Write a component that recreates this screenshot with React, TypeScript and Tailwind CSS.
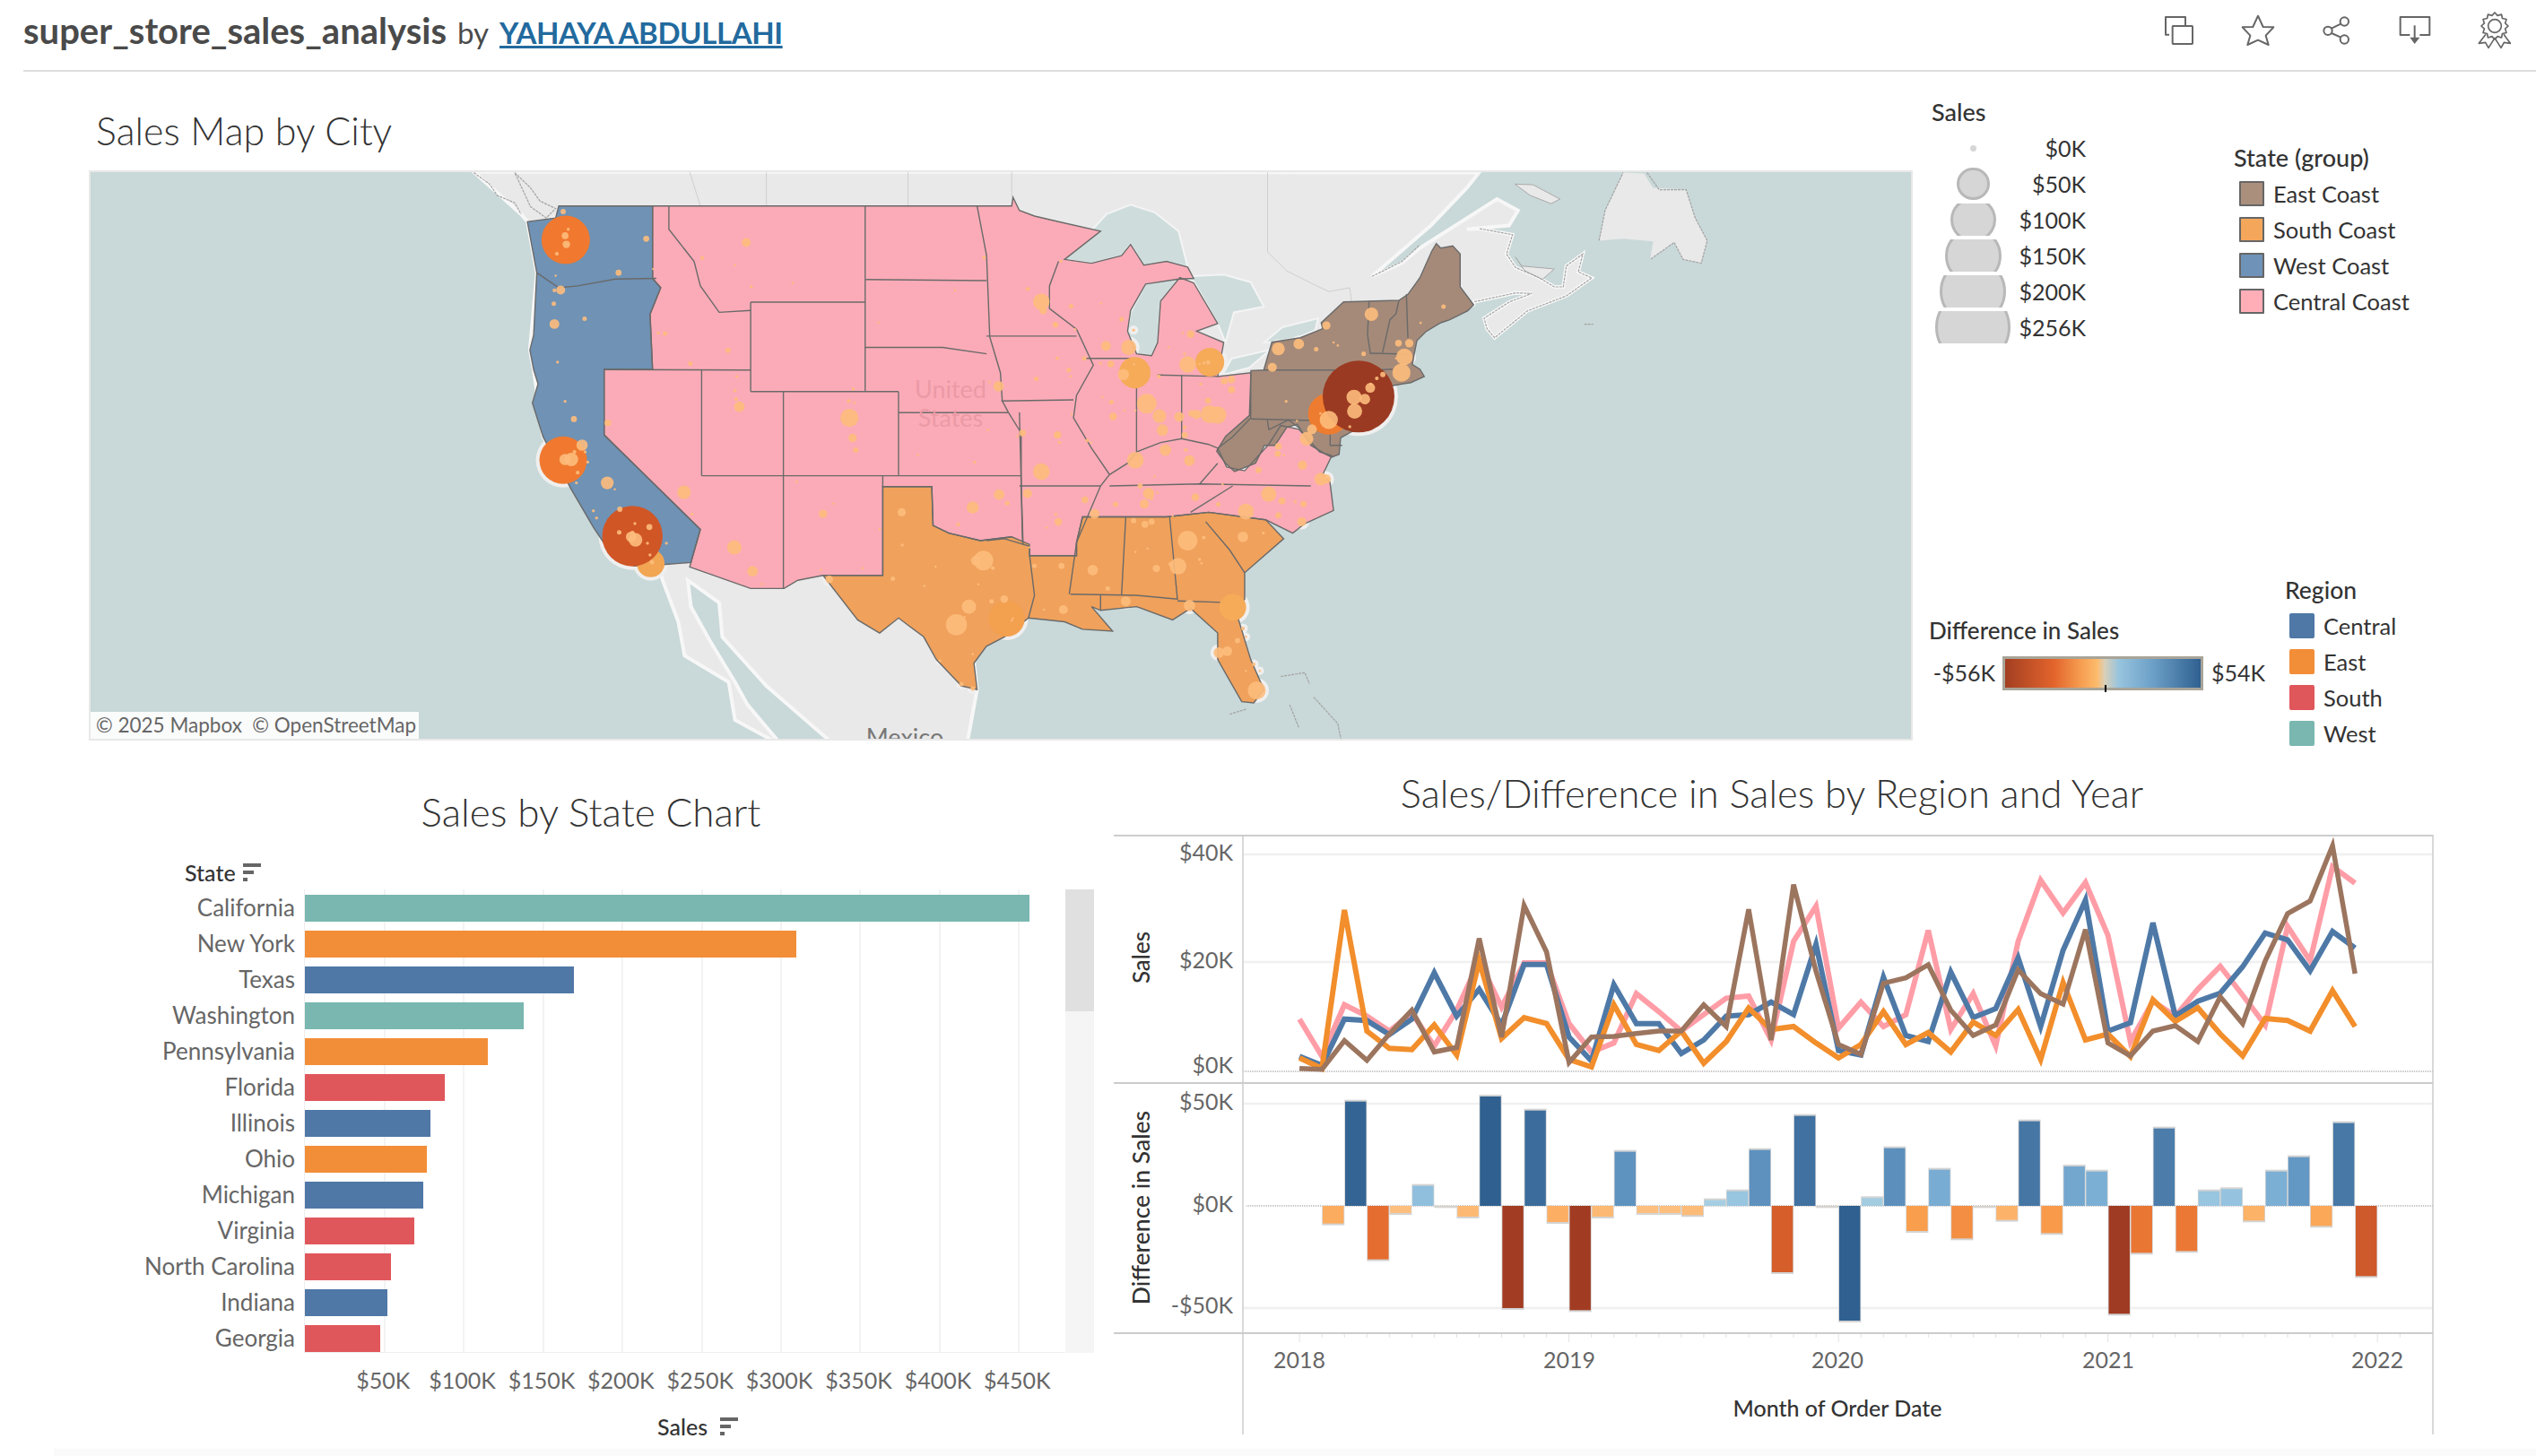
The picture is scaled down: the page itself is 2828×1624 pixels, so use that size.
import React from "react";

type Pt = [number, number];
const pairs = (a: number[], f: (x: number, y: number) => Pt): Pt[] => {
  const r: Pt[] = [];
  for (let i = 0; i + 1 < a.length; i += 2) r.push(f(a[i], a[i + 1]));
  return r;
};
const wf = (x: number, y: number): Pt => [90 + x / 1.4255, 180 + y / 2.376];
const ef = (x: number, y: number): Pt => [1100 + x / 1.493, 180 + y / 2.376];
const nf = (x: number, y: number): Pt => [1350 + x / 3, 240 + y / 3];
const W = (...a: number[]) => pairs(a, wf);
const E = (...a: number[]) => pairs(a, ef);
const N = (...a: number[]) => pairs(a, nf);
const P = (...g: Pt[][]) => g.flat().map((p) => `${p[0].toFixed(1)},${p[1].toFixed(1)}`).join(" ");

const SEA = "#c9d8d8";
const LAND = "#e9e9e9";

const land = P(
  W(625, 28),
  E(0, 28, 820, 30, 800, 70, 740, 170),
  N(540, 205, 640, 160, 700, 110),
  E(850, 100, 885, 130, 870, 170, 800, 180),
  N(900, 45, 1010, 65, 990, 130, 1020, 175, 1100, 210, 1150, 240, 1180, 240, 1190, 170, 1245, 130, 1230, 190, 1275, 210, 1190, 270, 1060, 320, 950, 410, 925, 380, 915, 345, 1000, 290, 1075, 262, 1020, 260, 880, 290, 880, 300),
  E(720, 440, 700, 560, 560, 680, 500, 900, 400, 1100, 250, 1170, 100, 1190, 0, 1240),
  W(1420, 1330, 1425, 1400, 1410, 1535, 1190, 1535, 1090, 1390, 1020, 1260, 1015, 1170, 965, 1110, 970, 1180, 1000, 1270, 1040, 1380, 1060, 1440, 1108, 1535, 1100, 1535, 1040, 1480, 1030, 1380, 960, 1310, 950, 1220, 925, 1110, 920, 1080, 880, 1050, 780, 850, 735, 730, 720, 552, 714, 500, 725, 295, 710, 160, 700, 140)
);
const newfoundland = P(E(1020, 210, 1030, 130, 1060, 30, 1095, 32, 1110, 70, 1165, 75, 1180, 150, 1200, 210, 1190, 270, 1160, 260, 1145, 215, 1105, 260, 1110, 212, 1060, 205));
const anticosti = P(E(880, 60, 910, 62, 955, 100, 940, 112, 905, 90));
const pei = P(N(1020, 140, 1040, 170, 1150, 180, 1110, 215, 1050, 185));

const westCoast = P(W(760, 118, 909, 118, 909, 310, 922, 335, 905, 405, 909, 552, 832, 552, 832, 725, 985, 975, 970, 1063, 930, 1068, 880, 1072, 835, 1020, 815, 970, 780, 870, 735, 730, 718, 640, 727, 590, 720, 552, 714, 500, 720, 460, 725, 295, 710, 160, 755, 150));
const central = P(
  W(909, 118, 1480, 118, 1482, 95),
  E(55, 130, 80, 145, 120, 160, 190, 185, 130, 260, 175, 270, 225, 250, 240, 220, 262, 275, 300, 265, 335, 280, 345, 310, 320, 312, 265, 325, 240, 395, 235, 450, 250, 510, 275, 515, 285, 480, 290, 370, 322, 308, 345, 322, 385, 430, 350, 450, 395, 480, 385, 570, 440, 560, 440, 680, 410, 730, 385, 760, 400, 810, 430, 820, 470, 750, 490, 700, 520, 710, 555, 770, 575, 780, 560, 830, 572, 850, 578, 925, 530, 960, 510, 985, 465, 950, 370, 930, 300, 942, 160, 942, 150, 1010, 150, 1045, 72, 1045, 72, 1020, 30, 1000, 0, 1005),
  W(1480, 995, 1430, 1005, 1380, 985, 1355, 965, 1353, 862, 1275, 862, 1275, 1097, 1180, 1097, 1140, 1110, 1118, 1132, 1065, 1132, 968, 1075, 985, 975, 832, 725, 832, 552, 909, 552, 905, 405, 922, 335, 909, 310)
);
const south = P(
  W(1275, 862, 1353, 862, 1355, 965, 1380, 985, 1430, 1005, 1480, 995, 1508, 1015),
  E(72, 1045, 150, 1045, 150, 1010, 160, 942, 300, 942, 370, 930, 465, 950, 495, 1000, 430, 1090, 430, 1160, 415, 1190, 440, 1320, 462, 1400, 445, 1435, 425, 1432, 385, 1320, 385, 1250, 340, 1185, 310, 1215, 250, 1180, 190, 1190, 175, 1180, 210, 1245, 160, 1240, 130, 1220, 70, 1210, 30, 1260, 0, 1285),
  W(1420, 1330, 1425, 1400, 1400, 1390, 1360, 1320, 1340, 1260, 1300, 1210, 1270, 1250, 1235, 1215, 1180, 1097, 1275, 1097)
);
const eastCoast = P(N(755, 95, 770, 110, 810, 103, 835, 130, 835, 240, 880, 300, 860, 320, 800, 350, 770, 360, 720, 390, 690, 420, 680, 470, 675, 500, 700, 515, 715, 540, 670, 560, 610, 570, 480, 720, 435, 745, 430, 800, 405, 810, 385, 800, 335, 770, 290, 700, 255, 710, 215, 770, 180, 770, 150, 830, 80, 858, 50, 830, 20, 790, 50, 740, 130, 670, 135, 520, 178, 518, 205, 425, 300, 410, 375, 380, 370, 360, 445, 290, 630, 285, 660, 265, 700, 210, 740, 120));

const lakes = [
  P(E(130, 260, 200, 140, 240, 115, 280, 135, 320, 185, 335, 280, 300, 265, 262, 275, 240, 220, 225, 250, 175, 270)),
  P(E(240, 400, 265, 325, 322, 308, 290, 370, 285, 480, 275, 515, 250, 510, 235, 450)),
  P(E(325, 305, 395, 300, 440, 320, 462, 385, 412, 400, 398, 480, 385, 430, 345, 318)),
  P(N(40, 535, 70, 480, 200, 450, 130, 510)),
  P(N(180, 425, 240, 375, 360, 345, 350, 385, 290, 410, 205, 425)),
];

const borderLines = [
  W(725, 295, 760, 335, 790, 330, 850, 312, 915, 310), W(832, 552, 1065, 553), W(935, 118, 935, 180, 975, 265, 985, 330, 1015, 400, 1065, 395),
  W(1065, 373, 1065, 610), W(1065, 373, 1247, 373), W(1247, 118, 1247, 610), W(1248, 313, 1440, 316), W(1247, 493, 1370, 493, 1440, 510),
  W(1065, 610, 1300, 610), W(1300, 610, 1300, 833), W(1300, 666, 1475, 666), W(987, 553, 987, 833), W(1117, 610, 1117, 1132), W(987, 833, 1495, 833),
  W(1275, 833, 1275, 862), W(1495, 720, 1495, 860, 1498, 1015), W(1475, 666, 1495, 720), W(1425, 118, 1440, 250, 1445, 465), W(1445, 465, 1462, 560, 1465, 635, 1475, 666),
  E(0, 463, 150, 463), E(25, 635, 145, 632), E(120, 265, 105, 330, 105, 390, 150, 445, 178, 540, 150, 620, 145, 680, 175, 760, 205, 830, 190, 860, 150, 1010),
  E(165, 522, 245, 522), E(250, 570, 250, 770, 235, 800, 205, 830), E(325, 566, 325, 735), E(285, 566, 385, 570), E(250, 770, 290, 745, 325, 735, 370, 750, 385, 760),
  E(205, 860, 355, 855, 540, 860), E(355, 855, 385, 800), E(410, 860, 340, 930), E(55, 665, 58, 860, 60, 1010), E(55, 860, 190, 860),
  E(232, 942, 225, 1148), E(305, 942, 318, 1160, 250, 1150, 140, 1147), E(150, 1010, 138, 1147), E(190, 1150, 190, 1188), E(365, 955, 405, 1030, 430, 1090), E(318, 1165, 415, 1170),
  E(72, 1045, 80, 1150, 70, 1210),
  N(530, 290, 525, 400, 535, 465), N(630, 285, 620, 330, 600, 350, 575, 460), N(655, 265, 660, 410), N(535, 462, 665, 465), N(525, 520, 610, 515), N(178, 518, 415, 518),
  N(135, 682, 370, 688), N(190, 685, 195, 718, 260, 685, 300, 715), N(400, 730, 400, 770, 440, 770),
];

const greyScribbles = [
  W(625, 30, 650, 60, 662, 90, 690, 110, 700, 140), W(690, 30, 715, 70, 730, 105, 755, 125, 740, 150, 715, 120, 690, 30),
  E(1020, 210, 1030, 130, 1060, 30), E(1100, 30, 1120, 75, 1165, 75, 1180, 150, 1200, 210, 1190, 270, 1160, 260, 1145, 215, 1105, 260),
  N(900, 45, 1010, 65, 990, 130, 1020, 175, 1100, 210, 1150, 240, 1180, 240, 1190, 170, 1245, 130, 1230, 190, 1275, 210, 1190, 270, 1060, 320, 950, 410, 925, 380, 915, 345, 1000, 290, 1075, 262, 1020, 260, 880, 290),
  N(540, 205, 640, 155, 700, 100),
  E(490, 1365, 530, 1355, 538, 1385), E(505, 1440, 520, 1500), E(545, 1420, 585, 1490, 590, 1530), E(405, 1465, 432, 1452), N(1250, 365, 1280, 365),
];

const blobs = [
  W(968, 28, 985, 118), W(1090, 28, 1090, 118), W(1315, 28, 1315, 118), W(1480, 28, 1480, 95),
  E(468, 28, 468, 240, 500, 290, 550, 330, 570, 345, 605, 335, 608, 372),
];

const westDots = [767,133,7,775,180,4,770,197,9,772,220,10,757,245,5,899,205,8,855,295,8,910,285,3,763,341,12,753,342,5,755,303,3,752,377,6,753,431,13,801,417,6,758,532,4,770,636,4,784,683,8,838,693,9,797,752,15,785,770,5,780,790,18,770,790,15,790,825,5,806,797,4,802,770,4,788,852,4,837,852,17,849,869,3,815,926,4,820,945,4,857,922,7,881,960,4,904,969,8,856,983,6,877,985,6,882,1003,18,875,995,14,901,1012,4,905,1043,4,931,1012,4,908,1062,6,959,877,18,1058,215,12,988,256,5,1040,275,3,1066,332,4,1132,322,3,1029,501,7,969,536,6,918,455,4,929,456,6,1043,570,4,1040,607,4,1042,630,5,1047,650,14,972,935,4,1039,1023,19,1068,1086,14,1083,1120,3,1180,934,11,1197,907,3,1138,849,3,1243,1078,3,1177,1083,3,1222,680,24,1221,635,5,1228,603,4,1230,640,3,1227,733,11,1232,765,7,1268,427,3,1390,342,3,1331,778,3,1421,797,4,1442,712,3,1436,255,5,1505,338,4,1527,372,22,1530,395,10,1549,432,6,1519,576,6,1552,522,4,1459,596,14,1445,585,3,1497,720,9,1489,728,3,1553,725,9,1527,822,22,1555,745,3,1460,883,14,1473,906,6,1418,917,16,1505,880,12,1395,962,5,1554,955,10,1550,935,4,1535,970,3,1270,975,3,1508,1023,3,1305,930,11,1306,1017,4,1359,1074,3,1435,1058,26,1423,1058,13,1450,1078,5,1291,1106,6,1341,1125,3,1427,1121,3,1392,1228,28,1412,1180,19,1405,1207,3,1448,1166,6,1468,1160,10,1190,1108,10,1366,1323,4,1400,1385,6,1418,1397,6,1418,1306,3,1516,1072,6,1559,1072,8,1482,1211,3,1480,1217,3];
const eastDots = [124,265,4,69,338,5,141,384,6,191,376,3,115,433,7,148,445,3,225,418,6,245,447,4,199,489,13,237,493,20,163,522,6,119,522,3,190,535,4,207,537,9,137,553,6,140,570,3,228,565,15,246,538,3,287,570,5,303,493,3,330,510,4,335,538,22,340,458,10,327,455,3,362,534,4,355,537,3,369,533,6,357,590,4,396,582,9,408,578,10,408,605,9,369,634,8,267,642,26,193,625,3,208,638,6,230,660,3,211,676,10,248,660,3,142,670,3,288,675,18,321,677,13,330,705,5,342,668,9,350,671,12,372,670,24,385,672,23,293,712,15,330,725,8,118,725,9,122,745,4,168,740,5,174,745,3,298,765,15,248,792,22,332,765,5,338,793,14,280,835,3,164,897,9,215,909,7,180,934,13,256,860,7,270,880,15,275,893,5,285,878,3,263,908,12,348,890,10,386,909,6,393,856,3,432,928,21,470,882,20,492,900,9,514,902,4,528,908,8,486,938,8,525,955,12,310,940,3,245,952,7,264,962,9,275,955,8,335,1005,26,362,997,5,427,995,14,461,985,4,268,1026,3,248,1035,3,319,1073,22,307,1067,6,283,1079,10,355,1055,4,358,1065,3,177,1083,14,202,1132,6,232,1166,13,338,1177,15,128,1188,12,96,1188,3,427,1238,5,432,1260,3,418,1270,7,387,1302,14,401,1298,13,445,1333,5,432,1350,3,455,1350,3,450,1402,24,641,405,18,566,435,11,723,428,3,761,385,6,486,497,17,520,484,14,549,498,6,578,480,3,585,488,3,476,546,12,628,510,6,686,482,9,704,482,11,696,518,22,691,560,24,682,522,3,650,575,5,660,565,7,639,600,13,640,590,4,612,625,20,630,630,14,613,662,20,605,703,4,499,636,4,570,685,24,556,668,3,542,710,13,533,735,18,517,688,3,486,755,9,485,775,8,495,778,3,526,805,12,453,818,8,557,842,17,566,842,12];

const bigCircles: { c: Pt; r: number; fill: string }[] = [
  { c: wf(906, 1065), r: 15.5, fill: "#f2a552" },
  { c: wf(771, 208), r: 27, fill: "#f0792f" },
  { c: wf(767, 792), r: 26.5, fill: "#f0792f" },
  { c: wf(877, 993), r: 33.7, fill: "#d05626" },
  { c: wf(1472, 1212), r: 20, fill: "#f3a04f" },
  { c: ef(247, 560), r: 17.5, fill: "#f5ab58" },
  { c: ef(372, 532), r: 16, fill: "#f5ab58" },
  { c: ef(410, 1182), r: 15, fill: "#f5ab58" },
  { c: nf(395, 665), r: 23, fill: "#ee7c30" },
  { c: nf(495, 607), r: 40, fill: "#9b3a22" },
];

const dotEls = (a: number[], f: (x: number, y: number) => Pt, key: string, halo: boolean) => {
  const out: React.ReactNode[] = [];
  for (let i = 0; i + 2 < a.length; i += 3) {
    const [x, y] = f(a[i], a[i + 1]);
    const r = Math.max(1.3, a[i + 2] / 2.376);
    out.push(
      halo ? (
        <circle key={key + i} cx={x} cy={y} r={r + 3.5} fill="#efefef" />
      ) : (
        <circle key={key + i} cx={x} cy={y} r={r} fill="#fdbd7c" fillOpacity={0.9} />
      )
    );
  }
  return out;
};

function MapSvg() {
  return (
    <svg viewBox="101 192 2030 632" className="block w-full h-full" preserveAspectRatio="none">
      <rect x="99" y="190" width="2034" height="636" fill={SEA} />
      <polygon points={land} fill={LAND} stroke="#f7f7f7" strokeWidth="4" />
      <polygon points={newfoundland} fill={LAND} />
      <polygon points={anticosti} fill={LAND} stroke="#aaa" strokeWidth="1" />
      <polygon points={pei} fill={LAND} stroke="#aaa" strokeWidth="1" />
      {blobs.map((b, i) => <polyline key={i} points={P(b)} fill="none" stroke="#cfcfcf" strokeWidth="1" />)}
      {greyScribbles.map((b, i) => <polyline key={i} points={P(b)} fill="none" stroke="#a3a3a3" strokeWidth="1.2" strokeDasharray="3 1" />)}
      {lakes.map((l, i) => <polygon key={i} points={l} fill="#cedcdc" stroke="#f4f4f4" strokeWidth="2" />)}
      {bigCircles.map((c, i) => <circle key={i} cx={c.c[0]} cy={c.c[1]} r={c.r + 4} fill="#efefef" />)}
      {dotEls(westDots, wf, "hw", true)}
      {dotEls(eastDots, ef, "he", true)}
      {[
        [westCoast, "#6f92b5"],
        [central, "#fbabb7"],
        [south, "#f0a15b"],
        [eastCoast, "#a58a79"],
      ].map(([p, c], i) => <polygon key={i} points={p} fill={c} />)}
      {[westCoast, central, south, eastCoast].map((p, i) => <polygon key={i} points={p} fill="none" stroke="#6a6a6a" strokeWidth="1.4" />)}
      {borderLines.map((b, i) => <polyline key={i} points={P(b)} fill="none" stroke="#6a6a6a" strokeWidth="1.4" />)}
      <text x="1060" y="444" textAnchor="middle" fontSize="27" fill="#eb9aa6" fontFamily="Lato, sans-serif">United</text>
      <text x="1060" y="476" textAnchor="middle" fontSize="27" fill="#eb9aa6" fontFamily="Lato, sans-serif">States</text>
      <text x="1009" y="832" textAnchor="middle" fontSize="27" fill="#777" fontFamily="Lato, sans-serif">Mexico</text>
      {bigCircles.map((c, i) => <circle key={i} cx={c.c[0]} cy={c.c[1]} r={c.r} fill={c.fill} />)}
      {dotEls(westDots, wf, "w", false)}
      {dotEls(eastDots, ef, "e", false)}
    </svg>
  );
}

const rows: [string, number, string][] = [
  ["California", 809, "#79b7b0"], ["New York", 549, "#f28e38"], ["Texas", 301, "#4f78a6"], ["Washington", 245, "#79b7b0"], ["Pennsylvania", 205, "#f28e38"],
  ["Florida", 157, "#e0575b"], ["Illinois", 141, "#4f78a6"], ["Ohio", 137, "#f28e38"], ["Michigan", 133, "#4f78a6"], ["Virginia", 123, "#e0575b"],
  ["North Carolina", 97, "#e0575b"], ["Indiana", 93, "#4f78a6"], ["Georgia", 85, "#e0575b"],
];
const ticks = ["$50K", "$100K", "$150K", "$200K", "$250K", "$300K", "$350K", "$400K", "$450K"];

const pink = [860,985,812,850,900,840,950,830,665,820,672,672,875,970,940,775,835,900,845,790,783,930,600,482,890,803,885,845,563,895,775,950,600,395,505,403,580,935,800,850,760,683,780,880,550,665,350,405];
const blue = [985,1015,860,865,912,860,705,850,760,880,677,677,920,1000,745,875,875,975,930,850,845,803,845,610,965,980,720,915,935,703,855,825,655,885,630,462,900,872,538,850,800,773,685,572,595,698,567,622];
const orange = [990,1025,495,900,958,962,880,980,665,925,855,875,995,1020,812,945,965,900,1008,935,823,895,885,940,990,945,835,945,905,970,870,915,828,995,738,930,910,985,795,868,822,910,983,858,865,900,765,885];
const brown = [1025,1028,932,998,910,830,970,955,590,920,480,635,1005,920,918,908,900,900,812,885,493,930,410,700,945,978,740,722,678,830,915,880,695,775,810,560,940,983,900,882,935,785,875,665,507,465,280,708];

const zx = (i: number) => 229 + 26.17 * i;
const fx = (z: number) => 1230 + z / 1.045;
const line = (a: number[]) => a.map((y, i) => `${fx(zx(i)).toFixed(1)},${(850 + y / 3).toFixed(1)}`).join(" ");

const diffs = [500,80,620,465,362,442,477,63,783,110,495,790,477,248,465,465,472,410,380,242,663,128,442,825,403,236,525,308,550,442,488,146,532,297,314,802,598,170,592,380,373,490,314,266,508,152,676];

const stops: [number, number[]][] = [
  [-56, [0x9a, 0x38, 0x21]], [-45, [0xab, 0x43, 0x25]], [-30, [0xe0, 0x65, 0x2d]], [-20, [0xf0, 0x80, 0x38]], [-12, [0xfb, 0xa3, 0x50]], [-3, [0xfd, 0xc4, 0x85]],
  [0, [0xd8, 0xd8, 0xc8]], [3, [0xa8, 0xcf, 0xe2]], [10, [0x92, 0xc1, 0xdf]], [18, [0x7b, 0xae, 0xd3]], [25, [0x63, 0x97, 0xc3]], [38, [0x4d, 0x7e, 0xab]], [54, [0x2f, 0x60, 0x90]],
];
const colorOf = (v: number) => {
  for (let i = 0; i < stops.length - 1; i++) {
    const [a, ca] = stops[i];
    const [b, cb] = stops[i + 1];
    if (v >= a && v <= b) {
      const t = (v - a) / (b - a);
      return `rgb(${ca.map((c, k) => Math.round(c + (cb[k] - c) * t)).join(",")})`;
    }
  }
  return "#2f6090";
};

const SVGFONT = "Lato, sans-serif";

function Charts() {
  const monthTicks: number[] = [];
  for (let i = 0; i <= 49; i++) monthTicks.push(fx(zx(i)));
  return (
    <svg viewBox="1230 920 1500 690" className="block w-[1500px] h-[690px]">
      <line x1="1386" y1="953" x2="2713" y2="953" stroke="#f0f0f0" strokeWidth="2.5" />
      <line x1="1386" y1="1073" x2="2713" y2="1073" stroke="#f0f0f0" strokeWidth="2.5" />
      <line x1="1386" y1="1195" x2="2713" y2="1195" stroke="#c4c4c4" strokeWidth="2" strokeDasharray="1 1" />
      <polyline points={line(pink)} fill="none" stroke="#ff9da7" strokeWidth="6" strokeLinejoin="miter" />
      <polyline points={line(blue)} fill="none" stroke="#4e79a7" strokeWidth="6" strokeLinejoin="miter" />
      <polyline points={line(orange)} fill="none" stroke="#f28e2b" strokeWidth="6" strokeLinejoin="miter" />
      <polyline points={line(brown)} fill="none" stroke="#9c755f" strokeWidth="5.500" strokeLinejoin="miter" />
      <line x1="1386" y1="1231" x2="2713" y2="1231" stroke="#f0f0f0" strokeWidth="2.5" />
      <line x1="1386" y1="1459" x2="2713" y2="1459" stroke="#f0f0f0" strokeWidth="2.5" />
      <line x1="1390" y1="1345" x2="2713" y2="1345" stroke="#c4c4c4" strokeWidth="2" strokeDasharray="1 1" />
      {diffs.map((z, i) => {
        const x0 = fx(zx(i + 1));
        const x1 = fx(zx(i + 2));
        const y = 1200 + z / 3;
        const top = Math.min(y, 1345);
        const h = Math.abs(y - 1345);
        const v = ((435 - z) / 343) * 50;
        return (
          <g key={i}>
            <rect x={x0} y={top} width={x1 - x0} height={h} fill="#d4d4d4" />
            <rect x={x0 + 0.8} y={z < 435 ? top + 2 : top} width={x1 - x0 - 1.6} height={Math.max(0, h - 2)} fill={colorOf(v)} />
          </g>
        );
      })}
      <line x1="1242" y1="932" x2="2713" y2="932" stroke="#cccccc" strokeWidth="2" />
      <line x1="1242" y1="1208" x2="2713" y2="1208" stroke="#cccccc" strokeWidth="2" />
      <line x1="1242" y1="1487" x2="2713" y2="1487" stroke="#cccccc" strokeWidth="2" />
      <line x1="1386" y1="931" x2="1386" y2="1600" stroke="#cccccc" strokeWidth="1.5" />
      <line x1="2713" y1="931" x2="2713" y2="1600" stroke="#cccccc" strokeWidth="1.5" />
      {monthTicks.map((x, i) => (
        <line key={i} x1={x} y1="1488" x2={x} y2={i % 12 === 0 ? 1497 : 1492} stroke="#e2e2e2" strokeWidth="1" />
      ))}
      <g fontFamily={SVGFONT} fontSize="25" fill="#666" textAnchor="end">
        <text x="1375" y="960">$40K</text>
        <text x="1375" y="1080">$20K</text>
        <text x="1375" y="1197">$0K</text>
        <text x="1375" y="1238">$50K</text>
        <text x="1375" y="1352">$0K</text>
        <text x="1375" y="1465">-$50K</text>
      </g>
      <g fontFamily={SVGFONT} fontSize="25" fill="#666" textAnchor="middle">
        {[["2018", 1449], ["2019", 1750], ["2020", 2049], ["2021", 2351], ["2022", 2651]].map(([t, x]) => (
          <text key={t as string} x={x as number} y="1526">{t}</text>
        ))}
      </g>
      <text x="2049" y="1580" textAnchor="middle" fontFamily={SVGFONT} fontSize="25" fontWeight="500" fill="#333">Month of Order Date</text>
      <text transform="translate(1282 1068) rotate(-90)" textAnchor="middle" fontFamily={SVGFONT} fontSize="26" fontWeight="500" fill="#333">Sales</text>
      <text transform="translate(1282 1347) rotate(-90)" textAnchor="middle" fontFamily={SVGFONT} fontSize="26.500" fontWeight="500" fill="#333">Difference in Sales</text>
    </svg>
  );
}

const SortIcon = () => (
  <svg width="20" height="20" viewBox="0 0 20 20" className="block">
    <rect x="0" y="0" width="20" height="4" fill="#666" />
    <rect x="0" y="8" width="12" height="4" fill="#666" />
    <rect x="0" y="16" width="5" height="4" fill="#666" />
  </svg>
);

const burst = (() => {
  const out: string[] = [];
  for (let i = 0; i < 24; i++) {
    const a = (i / 24) * Math.PI * 2;
    const r = i % 2 === 0 ? 45 : 36;
    out.push(`${(1146 + r * Math.sin(a)).toFixed(1)},${(72 - r * Math.cos(a)).toFixed(1)}`);
  }
  return out.join(" ");
})();

const HeaderIcons = () => (
  <svg width="420" height="60" viewBox="0 0 1260 180" fill="none" stroke="#666" strokeWidth="6" strokeLinejoin="round" className="block">
    <path d="M57 101H45V42H111V69" />
    <rect x="68" y="72" width="67" height="60" rx="2" />
    <path d="M354 38L371 75L406 76L380 104L389 135L354 119L319 135L328 104L302 76L337 75Z" />
    <circle cx="643" cy="57" r="14" />
    <circle cx="588" cy="88" r="14" />
    <circle cx="643" cy="117" r="14" />
    <path d="M600 80L631 65M600 96L631 110" />
    <path d="M862 102H830V42H928V102H895" />
    <path d="M878 70V112" />
    <path d="M862 110H895L878 132Z" fill="#666" stroke="none" />
    <polygon points={burst} strokeWidth="5" />
    <circle cx="1146" cy="72" r="22" strokeWidth="5" />
    <path d="M1116 100L1093 130L1115 127L1125 145L1146 112L1167 145L1177 127L1198 130L1176 100" strokeWidth="5" />
  </svg>
);

const sizeRows: [string, string][] = [
  ["$0K", "w-[7px] h-[7px] border-0 bg-[#b8b8b8]"],
  ["$50K", "w-[37px] h-[36px] border-[3px]"],
  ["$100K", "w-[51px] h-[50px] border-[3px]"],
  ["$150K", "w-[63px] h-[63px] border-[3px]"],
  ["$200K", "w-[74px] h-[74px] border-[3px]"],
  ["$256K", "w-[84px] h-[84px] border-[3px]"],
];

export default function App() {
  return (
    <div className="relative w-[2828px] h-[1624px] overflow-hidden bg-white font-['Lato',sans-serif] text-[#333]">
      <header className="ml-[26px] h-[80px] border-b-2 border-[#dddddd] flex items-start justify-between">
        <div className="flex items-baseline pt-[10px] text-[40px] leading-[48px]">
          <span className="font-bold text-[#4a4a4a]">super_store_sales_analysis</span>
          <span className="ml-[12px] text-[33px] text-[#4a4a4a]">by</span>
          <span className="ml-[12px] text-[33px] tracking-[-0.4px] font-bold text-[#226a9e] underline">YAHAYA ABDULLAHI</span>
        </div>
        <div className="pt-[5px] pr-[8px]">
          <HeaderIcons />
        </div>
      </header>

      <section className="flex h-[746px]">
        <div className="w-[2133px] pl-[99px] shrink-0">
          <h1 className="h-[110px] pt-[41px] pl-[8px] text-[43px] leading-[50px] font-light">Sales Map by City</h1>
          <div className="relative w-[2034px] h-[636px] border-2 border-[#e8e8e8]">
            <MapSvg />
            <div className="absolute left-0 bottom-0 h-[30px] w-[366px] bg-white/90 text-[22.5px] leading-[30px] text-[#666] pl-[6px] whitespace-pre">© 2025 Mapbox  © OpenStreetMap</div>
          </div>
        </div>
        <aside className="flex-1">
          <div className="flex h-[446px]">
            <div className="w-[240px] ml-[21px] pt-[29px]">
              <div className="text-[27px] leading-[32px] font-medium">Sales</div>
              <div className="mt-[4px]">
                {sizeRows.map(([t, cls]) => (
                  <div key={t} className="flex items-center h-[40px] pl-[3px]">
                    <div className="w-[86px] h-[36px] overflow-hidden flex items-center justify-center shrink-0">
                      <div className={`rounded-full shrink-0 bg-[#d6d6d6] border-[#b8b8b8] ${cls}`} />
                    </div>
                    <div className="w-[83px] text-right text-[25px] leading-[32px]">{t}</div>
                  </div>
                ))}
              </div>
            </div>
            <div className="ml-[97px] pt-[80px]">
              <div className="text-[27px] leading-[32px] font-medium">State (group)</div>
              <div className="mt-[4px]">
                {[["East Coast", "bg-[#ab8f7d]"], ["South Coast", "bg-[#f4a75b]"], ["West Coast", "bg-[#6f92b8]"], ["Central Coast", "bg-[#ffaeb8]"]].map(([t, c]) => (
                  <div key={t} className="flex items-center h-[40px] pl-[6px]">
                    <div className={`w-[28px] h-[28px] border-2 border-[#666] rounded-[1px] ${c}`} />
                    <span className="ml-[10px] text-[25.5px] leading-[32px]">{t}</span>
                  </div>
                ))}
              </div>
            </div>
          </div>
          <div className="flex">
            <div className="w-[397px] ml-[18px] pt-[161px]">
              <div className="text-[26px] leading-[32px] font-medium">Difference in Sales</div>
              <div className="flex items-center mt-[13px]">
                <span className="w-[74px] text-right text-[25px] leading-[32px] -translate-y-[1px]">-$56K</span>
                <div className="relative ml-[8px] w-[224px] h-[38px] border-[3px] border-[#a8a498] bg-[linear-gradient(90deg,#a33f22_0%,#e3642c_25%,#f59a4e_38%,#fdbb6c_47%,#d9cfb8_51%,#98c4de_58%,#6ea1c8_75%,#2f6090_100%)]">
                  <div className="absolute left-[111px] bottom-[-5px] w-[2px] h-[8px] bg-black" />
                </div>
                <span className="ml-[9px] text-[25px] leading-[32px] -translate-y-[1px]">$54K</span>
              </div>
            </div>
            <div className="pt-[116px]">
              <div className="text-[26.5px] leading-[32px] font-medium">Region</div>
              <div className="mt-[4px]">
                {[["Central", "bg-[#4f78a6]"], ["East", "bg-[#f28e38]"], ["South", "bg-[#e0575b]"], ["West", "bg-[#79b7b0]"]].map(([t, c]) => (
                  <div key={t} className="flex items-center h-[40px] pl-[5px]">
                    <div className={`w-[28px] h-[28px] rounded-[2px] ${c}`} />
                    <span className="ml-[10px] text-[25.5px] leading-[32px]">{t}</span>
                  </div>
                ))}
              </div>
            </div>
          </div>
        </aside>
      </section>

      <section className="flex">
        <div className="w-[1230px] shrink-0">
          <h2 className="ml-[339px] w-[640px] h-[106px] pt-[54px] text-center text-[44px] leading-[50px] font-light">Sales by State Chart</h2>
          <div className="flex items-center h-[34px] pl-[206px] mt-[24px] mb-[2px]">
            <span className="text-[25px] leading-[32px] font-medium">State</span>
            <span className="ml-[8px]"><SortIcon /></span>
          </div>
          <div className="flex">
            <div className="relative ml-[339px] w-[849px] h-[517px] border-l border-b border-[#eeeeee]">
              <div className="absolute inset-0 flex pl-[88px]">
                {ticks.map((t) => (
                  <div key={t} className="w-[88.4px] shrink-0 border-l-2 border-[#f3f3f3]" />
                ))}
              </div>
              <div className="relative pt-[6px]">
                {rows.map(([n, w, c]) => (
                  <div key={n} className="relative h-[40px]">
                    <div className="absolute right-[calc(100%+11px)] top-[-1px] h-[30px] whitespace-nowrap text-right text-[26px] leading-[30px] text-[#666]">{n}</div>
                    <div className="h-[30px]" style={{ width: w - 1, backgroundColor: c }} />
                  </div>
                ))}
              </div>
            </div>
            <div className="w-[32px] h-[517px] bg-[#f5f5f5]">
              <div className="h-[136px] bg-[#e0e0e0]" />
            </div>
          </div>
          <div className="flex ml-[383px] mt-[14px]">
            {ticks.map((t) => (
              <div key={t} className="w-[88.4px] shrink-0 text-center text-[25px] leading-[32px] text-[#666]">{t}</div>
            ))}
          </div>
          <div className="flex items-center ml-[733px] mt-[20px]">
            <span className="text-[25px] leading-[32px] font-medium">Sales</span>
            <span className="ml-[14px]"><SortIcon /></span>
          </div>
        </div>
        <div className="w-[1500px] shrink-0">
          <h2 className="w-[1492px] h-[94px] pt-[33px] text-center text-[43.5px] leading-[50px] font-light">Sales/Difference in Sales by Region and Year</h2>
          <Charts />
        </div>
      </section>
      <div className="absolute left-[60px] right-0 bottom-0 h-[8px] bg-[#fafafa]" />
    </div>
  );
}
